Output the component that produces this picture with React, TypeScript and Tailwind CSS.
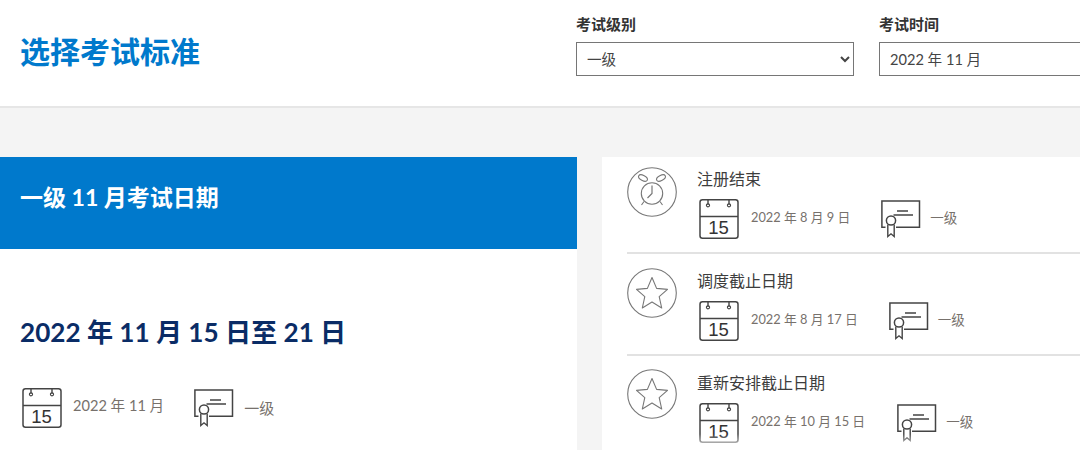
import React from "react";

function CalendarIcon({ className = "" }: { className?: string }) {
  return (
    <svg width="40" height="40" viewBox="0 0 40 40" fill="none" stroke="#444" className={`shrink-0 block ${className}`}>
      <rect x="1" y="0.75" width="38" height="38.5" rx="2.5" strokeWidth="1.5" />
      <path d="M1 17.5H39" strokeWidth="1.5" />
      <path d="M9 1V6M30 1V6" strokeWidth="1.4" />
      <circle cx="9" cy="6.3" r="1.6" strokeWidth="1.1" />
      <circle cx="30" cy="6.3" r="1.6" strokeWidth="1.1" />
      <text x="19.5" y="35" textAnchor="middle" fontSize="18.5" fill="#333" stroke="none" className="[font-family:'Liberation_Sans',sans-serif]">15</text>
    </svg>
  );
}

function CertIcon() {
  return (
    <svg width="40" height="38" viewBox="0 0 40 38" fill="none" stroke="#444" className="shrink-0 block">
      <path d="M4.5 27.2H0.9V0.9H38.5V27.2H15" strokeWidth="1.5" />
      <path d="M16 11H27M12.5 15H32" strokeWidth="1.3" />
      <circle cx="10" cy="20.5" r="4.6" strokeWidth="1.5" />
      <path d="M6.8 24.5V36.5L10 33.8L13.2 36.5V24.5" strokeWidth="1.4" />
    </svg>
  );
}

function ClockIcon() {
  return (
    <svg width="50" height="50" viewBox="0 0 50 50" fill="none" stroke="#777" className="shrink-0 block">
      <circle cx="25" cy="25" r="24.3" strokeWidth="1.1" />
      <circle cx="25" cy="26.5" r="10.7" strokeWidth="1.1" />
      <path d="M25 18.5V26.5L20.5 31" strokeWidth="1.2" />
      <ellipse cx="16" cy="11" rx="4.8" ry="2.6" transform="rotate(28 16 11)" strokeWidth="1.1" />
      <ellipse cx="34" cy="11" rx="4.8" ry="2.6" transform="rotate(-28 34 11)" strokeWidth="1.1" />
      <path d="M17 34.5L14.5 38M33 34.5L35.5 38" strokeWidth="1.1" />
    </svg>
  );
}

function StarIcon() {
  return (
    <svg width="50" height="50" viewBox="0 0 50 50" fill="none" stroke="#777" className="shrink-0 block">
      <circle cx="25" cy="25" r="24.3" strokeWidth="1.1" />
      <path d="M25 9.5L29.6 20.4L40.5 21.4L32.2 28.6L34.7 40L25 34L15.3 40L17.8 28.6L9.5 21.4L20.4 20.4Z" strokeWidth="1.1" strokeLinejoin="round" />
    </svg>
  );
}

function Row({
  icon, title, date, gap, rowClass, iconClass,
}: { icon: React.ReactNode; title: string; date: string; gap: string; rowClass: string; iconClass: string }) {
  return (
    <div className={`flex ${rowClass}`}>
      <div className={iconClass}>{icon}</div>
      <div className="ml-[20px]">
        <div className="text-[16px] leading-[24px] text-[#3d3d3d]">{title}</div>
        <div className="flex items-center mt-[8px] h-[40px]">
          <CalendarIcon className="ml-[2px]" />
          <span className="ml-[12px] text-[12.8px] text-[#77716c] mb-[3px]">{date}</span>
          <div className={`flex items-center ${gap}`}>
            <CertIcon />
            <span className="ml-[9px] text-[13.5px] text-[#77716c] mb-[2px]">一级</span>
          </div>
        </div>
      </div>
    </div>
  );
}

function Field({ label, value, gap }: { label: string; value: string; gap?: string }) {
  return (
    <div className={`w-[278px] ${gap ?? ""} shrink-0`}>
      <div className="text-[15px] font-bold leading-[20px] text-[#333] mb-[8px]">{label}</div>
      <select
        defaultValue={value}
        className="w-full h-[34px] bg-white border border-[#767676] text-[14.6px] text-[#444] pl-[6px] [font-family:inherit]"
      >
        <option>{value}</option>
      </select>
    </div>
  );
}

export default function App() {
  return (
    <div className="w-[1080px] h-[450px] overflow-hidden relative bg-[#f4f4f4] [font-family:Lato,'Noto_Sans_CJK_SC',sans-serif]">
      <header className="h-[108px] bg-white border-b-2 border-[#e6e6e6] flex">
        <h1 className="w-[576px] shrink-0 pl-[20px] pt-[31px] text-[30px] leading-[40px] font-bold text-[#0079cc]">选择考试标准</h1>
        <div className="flex pt-[14px] overflow-hidden">
          <Field label="考试级别" value="一级" />
          <Field label="考试时间" value="2022 年 11 月" gap="ml-[25px]" />
        </div>
      </header>
      <main className="flex mt-[49px]">
        <section className="w-[577px] shrink-0 h-[293px] bg-white">
          <div className="h-[92px] bg-[#0079cc] flex items-center pl-[20px] text-[23px] font-bold text-white pb-[12px]">一级 11 月考试日期</div>
          <h2 className="pl-[20px] mt-[64px] text-[26.1px] leading-[38px] font-bold text-[#0a2c66]">2022 年 11 月 15 日至 21 日</h2>
          <div className="flex items-center pl-[22px] mt-[37px]">
            <CalendarIcon />
            <span className="ml-[11px] text-[14.6px] text-[#77716c] mb-[5px]">2022 年 11 月</span>
            <div className="flex items-center ml-[30px]">
              <CertIcon />
              <span className="ml-[10px] text-[15px] text-[#77716c]">一级</span>
            </div>
          </div>
        </section>
        <section className="ml-[25px] flex-1 h-[293px] bg-white pl-[25px]">
          <Row icon={<ClockIcon />} title="注册结束" date="2022 年 8 月 9 日" gap="ml-[31px]" rowClass="h-[97px] pt-[10px] border-b-2 border-[#e2e2e2]" iconClass="" />
          <Row icon={<StarIcon />} title="调度截止日期" date="2022 年 8 月 17 日" gap="ml-[31px]" rowClass="h-[102px] pt-[15px] border-b-2 border-[#e2e2e2]" iconClass="mt-[-1px]" />
          <Row icon={<StarIcon />} title="重新安排截止日期" date="2022 年 10 月 15 日" gap="ml-[32px]" rowClass="h-[94px] pt-[15px]" iconClass="mt-[-2px]" />
        </section>
      </main>
      <div className="absolute left-[602px] right-0 bottom-0 h-[16px] bg-gradient-to-b from-transparent to-white" />
    </div>
  );
}
